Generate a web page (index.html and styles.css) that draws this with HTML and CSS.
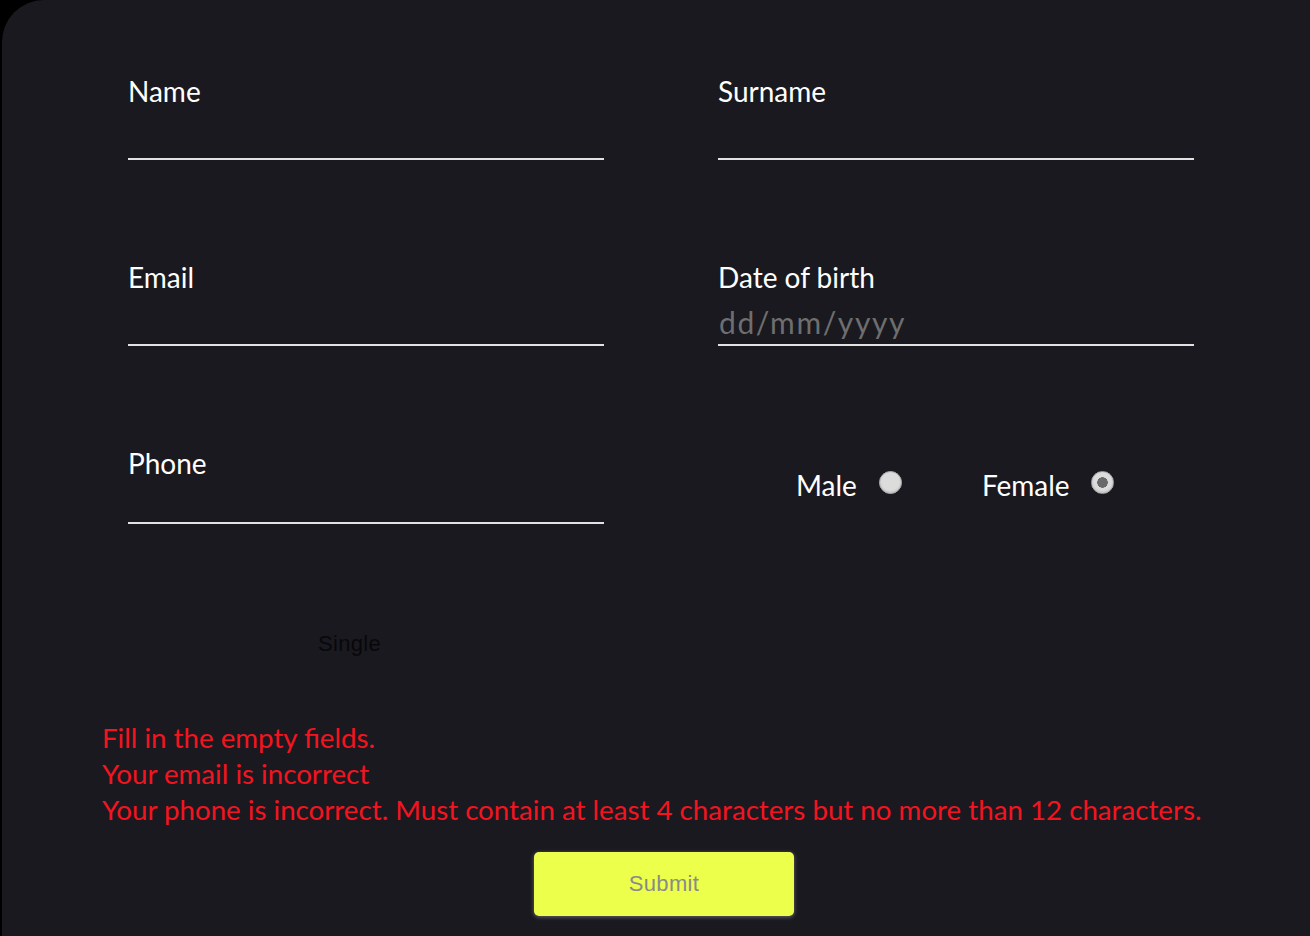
FILE: index.html
```html
<!DOCTYPE html>
<html lang="en">
<head>
<meta charset="utf-8">
<title>Form</title>
<link rel="stylesheet" href="styles.css">
</head>
<body>
<div class="card">
  <form class="form">
    <div class="grid">
      <div class="field">
        <label class="label">Name</label>
        <div class="input"></div>
      </div>
      <div class="field">
        <label class="label">Surname</label>
        <div class="input"></div>
      </div>
      <div class="field">
        <label class="label">Email</label>
        <div class="input"></div>
      </div>
      <div class="field">
        <label class="label">Date of birth</label>
        <div class="input"><span class="placeholder">dd/mm/yyyy</span></div>
      </div>
      <div class="field">
        <label class="label">Phone</label>
        <div class="input input-short"></div>
      </div>
      <div class="gender">
        <span class="opt">Male</span><span class="radio"></span>
        <span class="opt opt-f">Female</span><span class="radio checked"></span>
      </div>
    </div>
    <div class="status"><span>Single</span></div>
    <div class="errors">
      <p>Fill in the empty fields.</p>
      <p>Your email is incorrect</p>
      <p>Your phone is incorrect. Must contain at least 4 characters but no more than 12 characters.</p>
    </div>
    <div class="actions"><button type="button" class="submit">Submit</button></div>
  </form>
</div>
</body>
</html>
```
FILE: styles.css
```css
html, body {
  margin: 0;
  padding: 0;
  background: #000;
}
body {
  width: 1310px;
  height: 936px;
  overflow: hidden;
  font-family: Lato, "Liberation Sans", sans-serif;
}
.card {
  margin-left: 2px;
  height: 936px;
  background: #1a1920;
  border-top-left-radius: 42px;
  box-sizing: border-box;
  padding: 73px 0 0 126px;
}
.grid {
  display: grid;
  grid-template-columns: 476px 476px;
  column-gap: 114px;
  row-gap: 99px;
  align-items: start;
}
.field {
  display: flex;
  flex-direction: column;
}
.label {
  color: #fff;
  font-size: 28px;
  line-height: 34px;
  padding-top: 1px;
}
.input {
  height: 50px;
  border-bottom: 2px solid #e2e2e2;
  display: flex;
  align-items: flex-end;
}
.input-short {
  height: 42px;
}
.placeholder {
  color: #6e6e6e;
  font-size: 30px;
  line-height: 36px;
  letter-spacing: 1.6px;
  padding-left: 1px;
  padding-bottom: 4px;
}
.gender {
  display: flex;
  align-items: center;
  padding-left: 78px;
  padding-top: 17px;
  color: #fff;
  font-size: 28px;
}
.opt {
  line-height: 34px;
  padding-top: 6px;
}
.opt-f {
  margin-left: 80px;
}
.radio {
  width: 23px;
  height: 23px;
  border-radius: 50%;
  box-sizing: border-box;
  margin-left: 22px;
  background: #dcdcdc;
  border: 1px solid #a9a9a9;
  box-shadow: inset 0 -1px 2px rgba(0,0,0,0.15);
}
.radio.checked {
  margin-left: 21px;
  background: radial-gradient(circle, #6a6a6a 0 5px, #dcdcdc 5.5px);
}
.status {
  margin-top: 108px;
  padding-left: 190px;
  font-family: "Liberation Sans", Arial, sans-serif;
  font-size: 22px;
  letter-spacing: 0.3px;
  line-height: 24px;
  color: #08080b;
}
.errors {
  margin-left: -26px;
  margin-top: 64px;
  color: #f3141f;
  font-size: 27.7px;
  line-height: 36px;
}
.errors p {
  margin: 0;
}
.actions {
  margin-top: 24px;
  padding-left: 406px;
}
.submit {
  display: block;
  width: 260px;
  height: 64px;
  border: none;
  border-radius: 5px;
  background: #ecff4a;
  color: #8a8a8a;
  font-family: "Liberation Sans", Arial, sans-serif;
  font-size: 22px;
  letter-spacing: 0.3px;
  box-shadow: 0 1px 4px rgba(255,255,255,0.35);
}
```
